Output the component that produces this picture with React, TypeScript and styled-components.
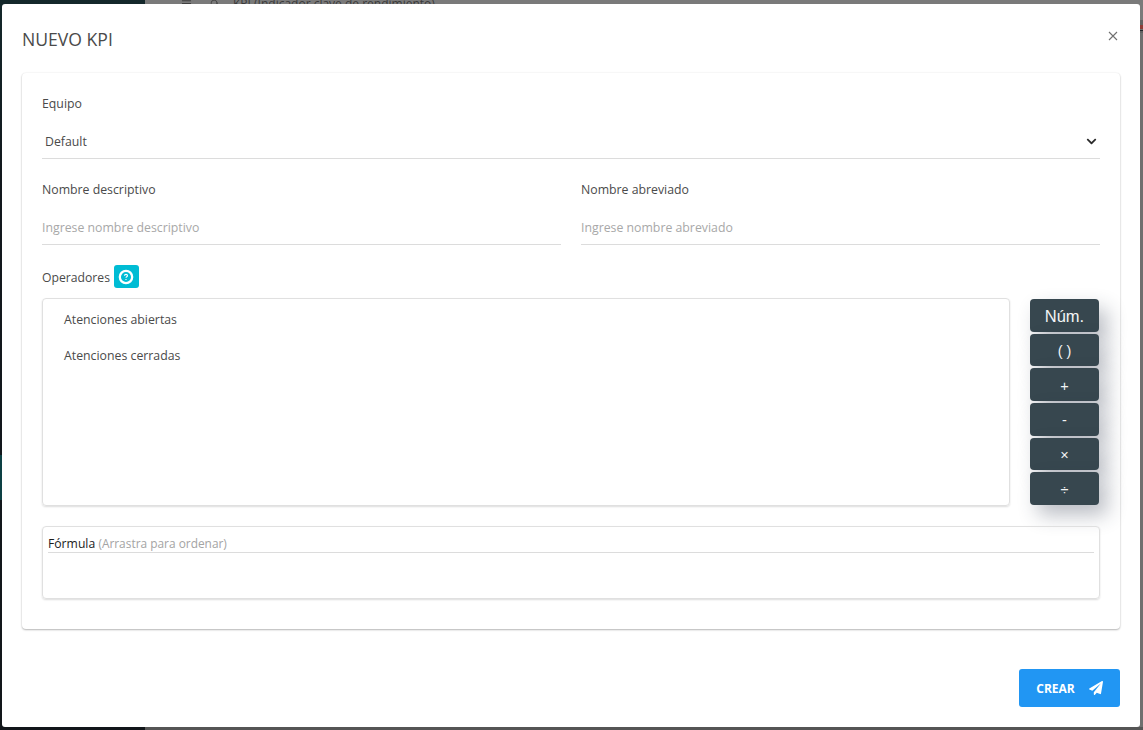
import React from 'react';
import styled, { createGlobalStyle } from 'styled-components';
import { FaPaperPlane, FaChevronDown } from 'react-icons/fa';
import { FiMenu, FiSearch } from 'react-icons/fi';

const GlobalStyle = createGlobalStyle`
  html, body {
    margin: 0;
    padding: 0;
    height: 100%;
    overflow: hidden;
  }
  * {
    box-sizing: border-box;
  }
`;

const Page = styled.div`
  position: relative;
  display: flex;
  width: 1143px;
  height: 730px;
  overflow: hidden;
  font-family: 'Open Sans', 'Liberation Sans', sans-serif;
  background: #6f6f6f;
`;

const Sidebar = styled.aside`
  display: flex;
  flex-direction: column;
  width: 145px;
  padding-top: 455px;
  background: linear-gradient(180deg, #14282b 0, #12181d 175px, #12161a 100%);
`;

const SidebarActive = styled.div`
  height: 45px;
  background: #0d4044;
`;

const Main = styled.main`
  flex: 1;
  display: flex;
  flex-direction: column;
`;

const TopBar = styled.div`
  display: flex;
  align-items: center;
  height: 33px;
  margin-top: -13px;
  padding-left: 36px;
  color: #3a3a3a;
  font-size: 12px;
  background: #7a7a7a;
  flex-shrink: 0;
`;

const SearchIcon = styled(FiSearch)`
  margin: 0 14px 0 18px;
`;

const BackRow = styled.div<{ $h: number; $line?: string; $bg?: string }>`
  height: ${({ $h }) => $h}px;
  flex-shrink: 0;
  background: ${({ $bg }) => $bg || 'transparent'};
  border-bottom: 1px solid ${({ $line }) => $line || '#626262'};
`;

const BackFill = styled.div`
  flex: 1;
`;

const BottomStrip = styled.div`
  height: 3px;
  flex-shrink: 0;
  background: #555;
`;

const Modal = styled.div`
  position: absolute;
  top: 4px;
  left: 2px;
  display: flex;
  flex-direction: column;
  width: 1138px;
  height: 723px;
  padding: 0 20px;
  background: #fff;
  border-radius: 3px;
`;

const ModalHeader = styled.header`
  display: flex;
  align-items: center;
  justify-content: space-between;
  height: 69px;
  flex-shrink: 0;
`;

const ModalTitle = styled.h4`
  margin: 0;
  color: #4a4a4a;
  font-size: 17.6px;
  font-weight: 400;
`;

const CloseButton = styled.button`
  display: flex;
  margin: 0 2px 5px 0;
  padding: 0;
  border: 0;
  background: none;
  color: #707070;
`;

const Card = styled.section`
  display: flex;
  flex-direction: column;
  height: 556px;
  padding: 21px 20px 30px;
  background: #fff;
  border-radius: 4px;
  box-shadow: 0 1px 2px rgba(0, 0, 0, 0.28), 0 0 2px rgba(0, 0, 0, 0.08);
`;

const Label = styled.label`
  display: block;
  height: 20px;
  color: #4a4a4a;
  font-size: 12.3px;
  line-height: 20px;
`;

const OperatorsLabel = styled(Label)`
  margin-top: 2px;
  font-size: 12.2px;
`;

const SelectField = styled.div`
  display: flex;
  align-items: center;
  justify-content: space-between;
  height: 36px;
  margin-top: 9px;
  padding: 1px 3px 0;
  border-bottom: 1px solid #dcdcdc;
  color: #4a4a4a;
  font-size: 12.3px;
`;

const FieldRow = styled.div`
  display: grid;
  grid-template-columns: 1fr 1fr;
  gap: 20px;
  margin-top: 21px;
`;

const InputField = styled.div`
  display: flex;
  align-items: center;
  height: 36px;
  margin-top: 9px;
  padding-top: 2px;
  border-bottom: 1px solid #dcdcdc;
  color: #a8a8a8;
  font-size: 12.3px;
`;

const OperatorsHead = styled.div`
  display: flex;
  align-items: center;
  gap: 4px;
  height: 23px;
  margin-top: 20px;
`;

const HelpButton = styled.button`
  display: flex;
  align-items: center;
  justify-content: center;
  width: 25px;
  height: 23px;
  padding: 0;
  border: 0;
  border-radius: 3px;
  background: #00bcd4;
  color: #fff;
`;

const OperatorsRow = styled.div`
  display: flex;
  gap: 20px;
  margin-top: 10px;
`;

const OperatorList = styled.div`
  flex: 1;
  display: flex;
  flex-direction: column;
  gap: 16px;
  height: 208px;
  padding: 11px 21px;
  border: 1px solid #e0e0e0;
  border-radius: 4px;
  box-shadow: 0 1px 2px rgba(0, 0, 0, 0.14);
`;

const OperatorItem = styled.div`
  height: 20px;
  color: #4a4a4a;
  font-size: 12.3px;
  line-height: 20px;
`;

const CalcColumn = styled.div`
  display: flex;
  flex-direction: column;
  gap: 2px;
  width: 69px;
  padding-top: 1px;
  margin-right: 1px;
`;

const CalcButton = styled.button<{ $large?: boolean }>`
  height: 32.7px;
  padding: 2px 0 0;
  border: 0;
  border-radius: 4px;
  background: #37474f;
  color: #f2f4f5;
  font-family: 'Liberation Sans', Arial, sans-serif;
  font-size: ${({ $large }) => ($large ? '16.5px' : '14.5px')};
  box-shadow: 8px 10px 20px rgba(40, 50, 70, 0.32);
`;

const FormulaBox = styled.div`
  height: 73px;
  margin-top: 20px;
  padding: 6px 5px 0;
  border: 1px solid #e0e0e0;
  border-radius: 4px;
  box-shadow: 0 1px 2px rgba(0, 0, 0, 0.14);
`;

const FormulaHead = styled.div`
  height: 20px;
  border-bottom: 1px solid #dcdcdc;
  color: #1c1c1c;
  font-size: 12.2px;
  line-height: 20px;
`;

const FormulaHint = styled.span`
  color: #a4a4a4;
  font-size: 11.9px;
`;

const ModalFooter = styled.footer`
  display: flex;
  justify-content: flex-end;
  margin-top: 40px;
`;

const CreateButton = styled.button`
  display: flex;
  align-items: center;
  justify-content: center;
  gap: 14px;
  width: 101px;
  height: 38px;
  padding: 0;
  border: 0;
  border-radius: 3px;
  background: #2196f3;
  color: #fff;
  font-family: inherit;
  font-size: 12px;
  font-weight: 700;
`;

const backRows = [
  { h: 14, $bg: '#7a7a7a' },
  { h: 120 },
  { h: 37 },
  { h: 20 },
  { h: 37 },
  { h: 10, $line: '#8e3b36' },
  { h: 32, $line: '#8e3b36' },
  { h: 18, $line: '#8e3b36' },
  { h: 33, $line: '#8e3b36' },
  { h: 27, $line: 'transparent' },
  { h: 39, $bg: '#23272b', $line: '#23272b' },
  { h: 21 },
  { h: 30 },
];

const calcButtons = ['( )', '+', '-', '×', '÷'];

export default function App() {
  return (
    <>
      <GlobalStyle />
      <Page>
        <Sidebar>
          <SidebarActive />
        </Sidebar>
        <Main>
          <TopBar>
            <FiMenu size={11} />
            <SearchIcon size={9} />
            <span>KPI (Indicador clave de rendimiento)</span>
          </TopBar>
          {backRows.map((row, index) => (
            <BackRow key={index} {...row} />
          ))}
          <BackFill />
          <BottomStrip />
        </Main>
        <Modal>
          <ModalHeader>
            <ModalTitle>NUEVO KPI</ModalTitle>
            <CloseButton aria-label="Cerrar">
              <svg width="10" height="10" viewBox="0 0 10 10">
                <path d="M1 1l8 8M9 1l-8 8" stroke="currentColor" strokeWidth="1.1" fill="none" />
              </svg>
            </CloseButton>
          </ModalHeader>
          <Card>
            <Label>Equipo</Label>
            <SelectField>
              Default
              <FaChevronDown size={11} color="#2b2b2b" />
            </SelectField>
            <FieldRow>
              <div>
                <Label>Nombre descriptivo</Label>
                <InputField>Ingrese nombre descriptivo</InputField>
              </div>
              <div>
                <Label>Nombre abreviado</Label>
                <InputField>Ingrese nombre abreviado</InputField>
              </div>
            </FieldRow>
            <OperatorsHead>
              <OperatorsLabel>Operadores</OperatorsLabel>
              <HelpButton aria-label="Ayuda">
                <svg width="16" height="16" viewBox="0 0 14 14" fill="none" stroke="currentColor">
                  <circle cx="7" cy="7" r="5.4" strokeWidth="2" />
                  <path d="M5.7 5.9c0-.8.6-1.2 1.3-1.2s1.3.4 1.3 1.1c0 1-1.3 1-1.3 1.9" strokeWidth="1" />
                  <path d="M7 8.8v.9" strokeWidth="1" />
                </svg>
              </HelpButton>
            </OperatorsHead>
            <OperatorsRow>
              <OperatorList>
                <OperatorItem>Atenciones abiertas</OperatorItem>
                <OperatorItem>Atenciones cerradas</OperatorItem>
              </OperatorList>
              <CalcColumn>
                <CalcButton $large>Núm.</CalcButton>
                {calcButtons.map((label) => (
                  <CalcButton key={label}>{label}</CalcButton>
                ))}
              </CalcColumn>
            </OperatorsRow>
            <FormulaBox>
              <FormulaHead>
                Fórmula <FormulaHint>(Arrastra para ordenar)</FormulaHint>
              </FormulaHead>
            </FormulaBox>
          </Card>
          <ModalFooter>
            <CreateButton>
              CREAR
              <FaPaperPlane size={14} />
            </CreateButton>
          </ModalFooter>
        </Modal>
      </Page>
    </>
  );
}
